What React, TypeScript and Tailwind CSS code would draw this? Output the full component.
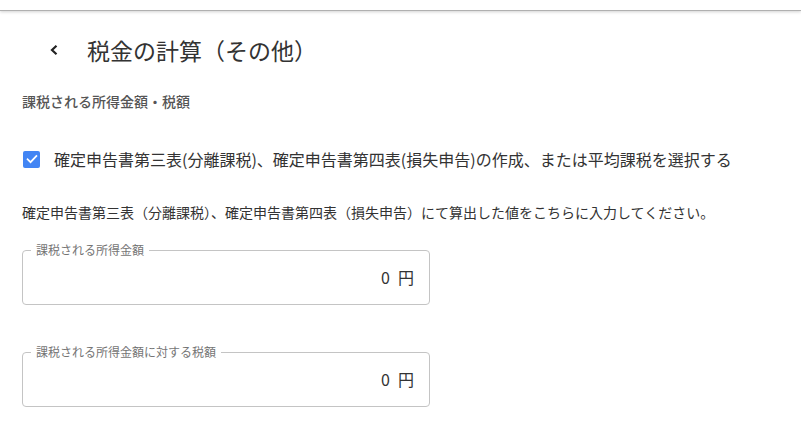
import { FC } from "react";

type FieldProps = {
  label: string;
  value: string;
  unit: string;
};

const AmountField: FC<FieldProps> = ({ label, value, unit }) => (
  <fieldset className="w-[408px] rounded-[4px] border border-[#c4c4c4] px-[8px] pb-0 pt-0">
    <legend className="ml-0 px-[5px] text-[12px] leading-[14px] text-[#757575]">
      {label}
    </legend>
    <div className="flex h-[47px] items-center justify-end pb-[7px] pr-[7px] text-[16px] text-[#333]">
      <span>{value}</span>
      <span className="ml-[8px]">{unit}</span>
    </div>
  </fieldset>
);

const CheckIcon: FC = () => (
  <svg viewBox="0 0 24 24" className="h-[14px] w-[14px]" fill="none">
    <path
      d="M4.5 12.5l5 5L19.5 7"
      stroke="white"
      strokeWidth="3"
      strokeLinecap="square"
    />
  </svg>
);

const App: FC = () => {
  return (
    <div
      className="min-h-[439px] bg-white"
      style={{ fontFamily: '"Noto Sans CJK JP", "Noto Sans", sans-serif' }}
    >
      <div className="h-[11px] border-b border-[#b0b0b0] bg-white shadow-[0_1px_3px_rgba(0,0,0,0.18)]" />

      <div className="px-[22px]">
        {/* page title */}
        <div className="mt-[22px] flex h-[34px] items-center">
          <button className="ml-[27px] flex h-[20px] w-[14px] items-center text-[#222]">
            <svg viewBox="0 0 10 12" className="h-[12px] w-[10px]" fill="none">
              <path
                d="M7.5 1.8L3 6l4.5 4.2"
                stroke="currentColor"
                strokeWidth="2.2"
              />
            </svg>
          </button>
          <h1 className="ml-[24px] text-[23px] font-normal leading-[30px] text-[#333]">
            税金の計算（その他）
          </h1>
        </div>

        <h2 className="mt-[24px] text-[14px] font-medium leading-[20px] text-[#555]">
          課税される所得金額・税額
        </h2>

        {/* separate taxation toggle */}
        <label className="mt-[36px] flex items-center">
          <span className="ml-[1px] flex h-[17px] w-[17px] items-center justify-center rounded-[2px] bg-[#4285f4]">
            <CheckIcon />
          </span>
          <span className="ml-[14px] text-[16px] leading-[24px] text-[#333]">
            確定申告書第三表(分離課税)、確定申告書第四表(損失申告)の作成、または平均課税を選択する
          </span>
        </label>

        <p className="mt-[31px] text-[14px] leading-[20px] text-[#333]">
          確定申告書第三表（分離課税）、確定申告書第四表（損失申告）にて算出した値をこちらに入力してください。
        </p>

        <div className="mt-[21px] flex flex-col gap-[40px]">
          <AmountField label="課税される所得金額" value="0" unit="円" />
          <AmountField label="課税される所得金額に対する税額" value="0" unit="円" />
        </div>
      </div>
    </div>
  );
};

export default App;
